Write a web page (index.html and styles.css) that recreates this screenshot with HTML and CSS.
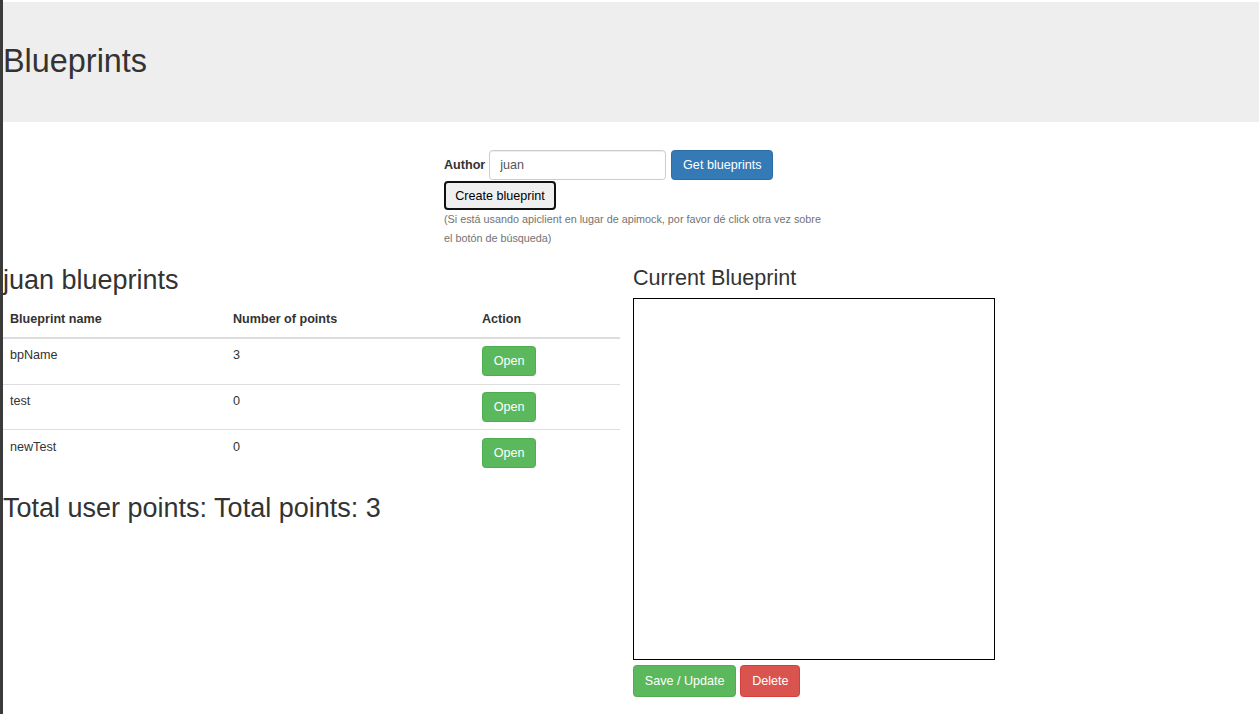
FILE: index.html
```html
<!DOCTYPE html>
<html lang="es">
<head>
<meta charset="utf-8">
<title>Blueprints</title>
<link rel="stylesheet" href="styles.css">
</head>
<body>
<header class="jumbotron">
  <h1 class="title">Blueprints</h1>
</header>

<section class="search">
  <div class="search-row">
    <label class="search-label" for="author">Author</label>
    <input id="author" class="search-input" type="text" value="juan">
    <button class="btn btn-primary">Get blueprints</button>
  </div>
  <button class="btn-create">Create blueprint</button>
  <p class="help">(Si está usando apiclient en lugar de apimock, por favor dé click otra vez sobre el botón de búsqueda)</p>
</section>

<section class="content">
  <div class="left-col">
    <h2 class="section-title list-title">juan blueprints</h2>
    <table class="bp-table">
      <thead>
        <tr>
          <th class="c1">Blueprint name</th>
          <th class="c2">Number of points</th>
          <th class="c3">Action</th>
        </tr>
      </thead>
      <tbody>
        <tr><td>bpName</td><td>3</td><td><button class="btn btn-success">Open</button></td></tr>
        <tr><td>test</td><td>0</td><td><button class="btn btn-success">Open</button></td></tr>
        <tr><td>newTest</td><td>0</td><td><button class="btn btn-success">Open</button></td></tr>
      </tbody>
    </table>
    <h2 class="section-title total-title">Total user points: Total points: 3</h2>
  </div>
  <div class="right-col">
    <h3 class="sub-title">Current Blueprint</h3>
    <div class="canvas"></div>
    <div class="actions">
      <button class="btn btn-success">Save / Update</button>
      <button class="btn btn-danger">Delete</button>
    </div>
  </div>
</section>
</body>
</html>
```

FILE: styles.css
```css
* { box-sizing: border-box; }

html, body {
  margin: 0;
  padding: 0;
}

body {
  font-family: "Liberation Sans", Arial, sans-serif;
  font-size: 12.6px;
  line-height: 18px;
  color: #333;
  background: #fff;
  border-left: 3px solid #3b3b3b;
  min-height: 100vh;
  padding-top: 2px;
}

.jumbotron {
  background: #eee;
  height: 120px;
  display: flex;
  align-items: center;
}

.title {
  margin: 0;
  font-size: 32.4px;
  font-weight: 500;
  line-height: 1.1;
}

.search {
  width: 382px;
  margin: 28px auto 0;
  padding-left: 4px;
}

.search-row {
  display: flex;
  align-items: center;
  height: 30px;
}

.search-label {
  font-weight: bold;
  margin-right: 4px;
}

.search-input {
  width: 177px;
  height: 30px;
  border: 1px solid #ccc;
  border-radius: 3.6px;
  padding: 0 10px;
  font-family: inherit;
  font-size: 12.6px;
  color: #555;
  margin-right: 5px;
  box-shadow: inset 0 1px 1px rgba(0,0,0,0.075);
}

.btn {
  display: inline-block;
  height: 30px;
  padding: 0 10.8px;
  font-family: inherit;
  font-size: 12.6px;
  line-height: 18px;
  font-weight: normal;
  color: #fff;
  border: 1px solid transparent;
  border-radius: 3.6px;
  cursor: pointer;
  vertical-align: middle;
}

.btn-primary { background: #337ab7; border-color: #2e6da4; }
.btn-success { background: #5cb85c; border-color: #4cae4c; }
.btn-danger { background: #d9534f; border-color: #d43f3a; }

.btn-create {
  display: block;
  margin-top: 1px;
  height: 29px;
  width: 112px;
  padding: 0;
  font-family: inherit;
  font-size: 12.6px;
  color: #000;
  background: #efefef;
  border: 2px solid #101010;
  border-radius: 4px;
}

.help {
  margin: 0;
  font-size: 10.8px;
  line-height: 19px;
  color: #737373;
}

.content {
  display: grid;
  grid-template-columns: 617px 362px;
  column-gap: 13px;
  align-items: start;
}

.section-title {
  margin: 18px 0 9px;
  font-size: 27px;
  font-weight: 500;
  line-height: 1.1;
}

.list-title {
  margin: 18px 0 7px;
}

.total-title {
  margin-top: 19px;
}

.sub-title {
  margin: 18px 0 8px;
  font-size: 21.6px;
  font-weight: 500;
  line-height: 1.1;
}

.bp-table {
  width: 617px;
  border-collapse: collapse;
}

.bp-table th,
.bp-table td {
  text-align: left;
  vertical-align: top;
  padding: 7.3px 7px;
  line-height: 18px;
}

.bp-table th {
  font-weight: bold;
  vertical-align: bottom;
  padding-top: 7.2px;
  padding-bottom: 9.2px;
  border-bottom: 2px solid #ddd;
}

.bp-table td {
  border-top: 1px solid #ddd;
}

.bp-table .c1 { width: 223px; }
.bp-table .c2 { width: 249px; }

.canvas {
  width: 362px;
  height: 362px;
  border: 1px solid #000;
  background: #fff;
}

.actions {
  display: flex;
  gap: 4px;
  margin-top: 5px;
}

.actions .btn { height: 32px; }
```
